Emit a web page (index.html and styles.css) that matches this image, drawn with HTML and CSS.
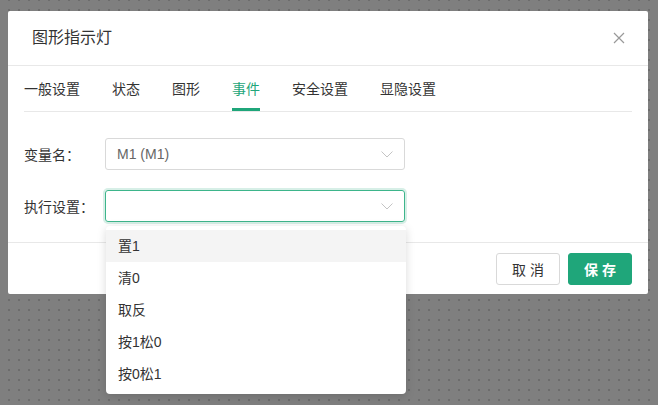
FILE: index.html
```html
<!DOCTYPE html>
<html>
<head lang="zh">
    <meta charset="UTF-8">
    <title>图形指示灯</title>
    <link rel="stylesheet" href="styles.css">
</head>
<body>
<div id="mask">
    <div id="dialog">
        <div class="dlg-head">
            <span class="dlg-title">图形指示灯</span>
            <svg class="dlg-close" width="12" height="12" viewBox="0 0 12 12">
                <path d="M1 1L11 11M11 1L1 11" stroke="#999" stroke-width="1.2" fill="none"/>
            </svg>
        </div>
        <div class="dlg-body">
            <ul class="tabs">
                <li>一般设置</li>
                <li>状态</li>
                <li>图形</li>
                <li class="active">事件</li>
                <li>安全设置</li>
                <li>显隐设置</li>
            </ul>
            <div class="row">
                <label>变量名：</label>
                <div class="select">
                    <span class="value">M1 (M1)</span>
                    <svg class="arrow" width="12" height="7" viewBox="0 0 12 7">
                        <path d="M0.5 0.5L6 6L11.5 0.5" stroke="#c4c4c4" stroke-width="1" fill="none"/>
                    </svg>
                </div>
            </div>
            <div class="row">
                <label>执行设置：</label>
                <div class="select focus">
                    <span class="value"></span>
                    <svg class="arrow" width="12" height="7" viewBox="0 0 12 7">
                        <path d="M0.5 0.5L6 6L11.5 0.5" stroke="#c4c4c4" stroke-width="1" fill="none"/>
                    </svg>
                    <ul class="menu">
                        <li class="hover">置1</li>
                        <li>清0</li>
                        <li>取反</li>
                        <li>按1松0</li>
                        <li>按0松1</li>
                    </ul>
                </div>
            </div>
        </div>
        <div class="dlg-foot">
            <button class="btn">取 消</button>
            <button class="btn primary">保 存</button>
        </div>
    </div>
</div>
</body>
</html>
```

FILE: styles.css
```css
*{
    margin: 0;
    padding: 0;
    box-sizing: border-box;
}
ul,li{
    list-style: none;
}
body{
    width: 658px;
    height: 405px;
    overflow: hidden;
    font-family: "Liberation Sans", "Noto Sans CJK SC", sans-serif;
    font-size: 14px;
    color: #333;
    background-color: #7f7f7f;
    background-image:
        linear-gradient(to right, #7f7f7f 8px, transparent 8px),
        linear-gradient(to bottom, #7f7f7f 8px, #6c6c6c 8px);
    background-size: 10px 10px;
    background-position: 0 1px;
}
#mask{
    padding: 11px 10px 0 8px;
}
#dialog{
    background: #fff;
    border-radius: 2px;
}
.dlg-head{
    display: flex;
    align-items: center;
    justify-content: space-between;
    padding: 16px 23px 16px 24px;
    border-bottom: 1px solid #e8e8e8;
}
.dlg-title{
    font-size: 16px;
    line-height: 22px;
    color: #333;
}
.dlg-close{
    display: block;
}
.dlg-body{
    padding: 0 16px 20px;
}
.tabs{
    display: flex;
    gap: 32px;
    border-bottom: 1px solid #e8e8e8;
    height: 46px;
}
.tabs li{
    line-height: 22px;
    padding: 12px 0 9px;
    border-bottom: 3px solid transparent;
    color: #333;
}
.tabs li.active{
    color: #1fa67a;
    border-bottom-color: #1fa67a;
}
.row{
    display: flex;
    align-items: center;
    margin-top: 26px;
}
.row + .row{
    margin-top: 20px;
}
.row label{
    width: 81px;
    color: #333;
}
.select{
    position: relative;
    width: 300px;
    height: 32px;
    border: 1px solid #d9d9d9;
    border-radius: 3px;
    display: flex;
    align-items: center;
    justify-content: space-between;
    padding: 0 11px;
}
.select .value{
    color: #666;
}
.select.focus{
    border-color: #3db58b;
    box-shadow: 0 0 0 2px rgba(31,166,122,.18);
}
.menu{
    position: absolute;
    left: 0;
    top: 35px;
    width: 300px;
    padding: 4px 0;
    background: #fff;
    border-radius: 4px;
    box-shadow: 0 2px 10px rgba(0,0,0,.15);
    z-index: 10;
}
.menu li{
    height: 32px;
    line-height: 32px;
    padding-left: 12px;
    color: #333;
}
.menu li.hover{
    background: #f4f4f4;
}
.dlg-foot{
    display: flex;
    justify-content: flex-end;
    gap: 8px;
    padding: 10px 16px 9px;
    border-top: 1px solid #e8e8e8;
}
.btn{
    width: 64px;
    height: 32px;
    border: 1px solid #d9d9d9;
    border-radius: 3px;
    background: #fff;
    color: #333;
    font-family: "Liberation Sans", "Noto Sans CJK SC", sans-serif;
    font-size: 14px;
}
.btn.primary{
    background: #1fa67a;
    border-color: #1fa67a;
    color: #fff;
    font-weight: bold;
}
```
